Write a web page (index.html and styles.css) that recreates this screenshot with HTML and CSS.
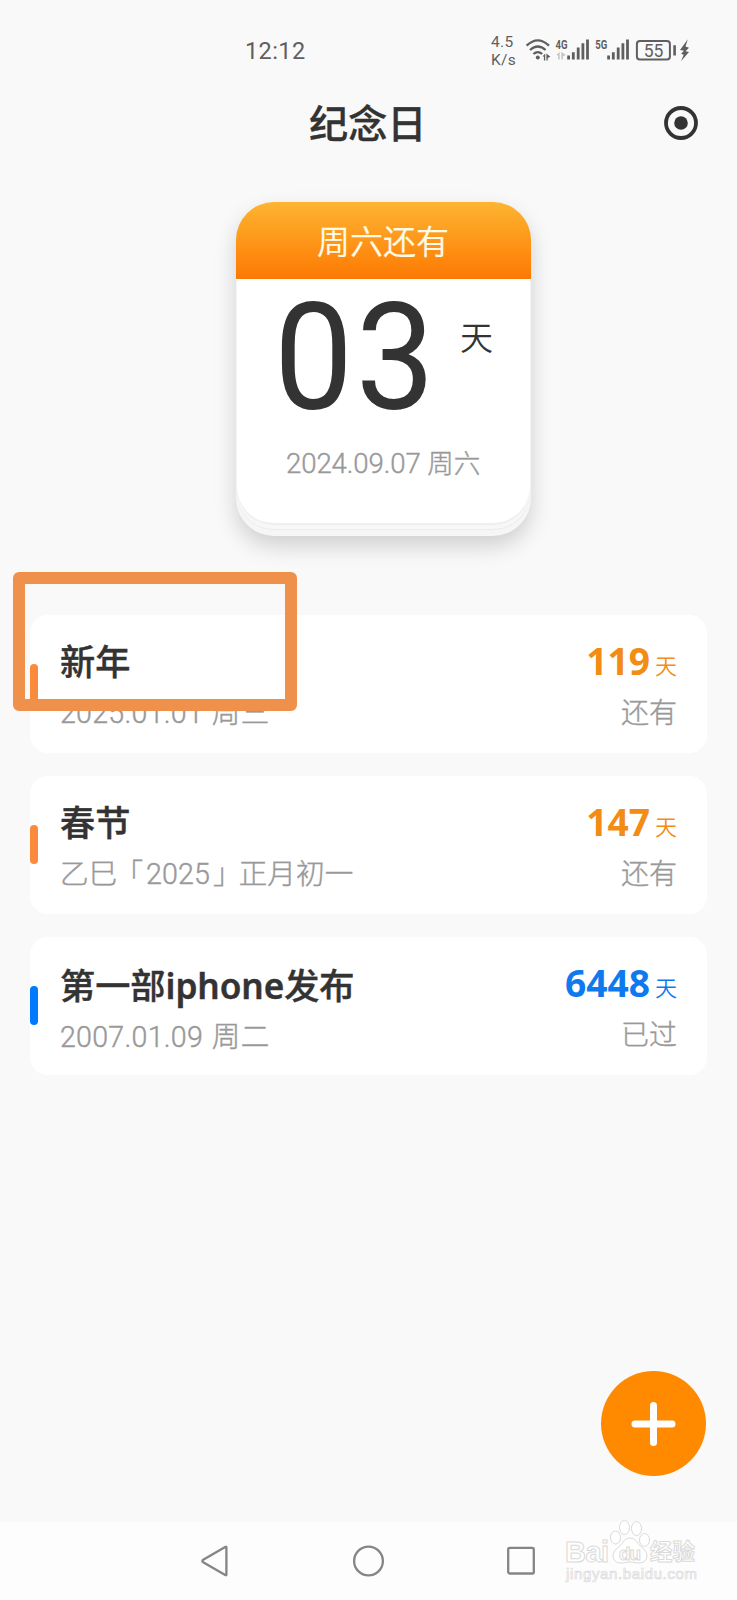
FILE: index.html
```html
<!DOCTYPE html>
<html lang="zh-CN">
<head>
<meta charset="utf-8">
<title>纪念日</title>
<link rel="stylesheet" href="styles.css">
</head>
<body>
<div class="screen">
  <header class="status">
    <span class="clock">12:12</span>
    <div class="speed"><span>4.5</span><span>K/s</span></div>
    <svg class="indicators" width="176" height="32" viewBox="0 0 176 32">
      <g fill="none" stroke="#5f5f5f" stroke-width="2.3">
        <path d="M2.600 9.600Q13.800-.9 25 9.600M6 14Q13.800 7 21.600 14M9.400 18Q13.800 14.200 18.200 18"/>
        <rect x="112.900" y="5.100" width="33" height="18.400" rx="3" stroke-width="2"/>
      </g>
      <g fill="#5f5f5f">
        <circle cx="13.800" cy="21.400" r="2"/>
        <path d="M18.500 20.600l2.700-3v6.800h-1.300v-3.800zM22.400 17.600l4 3.200-2.700 1.200v2.400h-1.300z"/>
        <path d="M43.200 19.600h2.800v3.800h-2.800zM47.900 16.200h2.800v7.200h-2.800zM52.800 11.600h2.800v11.800h-2.800zM57.500 7.200h2.800v16.200h-2.800zM62.100 3.600h2.800v19.800h-2.800z"/>
        <path d="M83.200 19.600H86v3.800h-2.800zM87.900 16.200h2.800v7.200h-2.800zM92.800 11.600h2.800v11.800h-2.800zM97.500 7.200h2.800v16.200h-2.800zM102.100 3.600h2.800v19.800h-2.800z"/>
        <path d="M149.300 9.300h2.600v10.200h-2.600zM163.800 3.200l-7.800 10.800 4 .7-2.900 3 2.600 1-2.700 6.500 8-9.200-3.500-.7 3.500-3.500-3.500-1.400z"/>
      </g>
      <path fill="#c6c6c6" d="M32.400 19l3.300-3.200v7.600h-1.600V19.600zM37.300 15.800l4.500 3.300-2.900 1.300v3h-1.600z"/>
      <text class="net" x="31.500" y="12.600" textLength="12" lengthAdjust="spacingAndGlyphs">4G</text>
      <text class="net" x="71.300" y="12.600" textLength="12" lengthAdjust="spacingAndGlyphs">5G</text>
      <text class="level" x="119.800" y="20.500" textLength="19.500">55</text>
    </svg>
  </header>

  <div class="titlebar">
    <h1>纪念日</h1>
    <svg class="target" width="34" height="34" viewBox="0 0 34 34"><circle cx="17" cy="17" r="15" fill="none" stroke="#333" stroke-width="3.800"/><circle cx="17" cy="17" r="6.800" fill="#333"/></svg>
  </div>

  <section class="calendar">
    <div class="sheet-head">周六还有</div>
    <div class="sheet">
      <div class="count"><span class="big">03</span><span class="unit">天</span></div>
      <div class="date">2024.09.07 <span class="week">周六</span></div>
    </div>
  </section>

  <main class="list">
    <article class="item">
      <i class="mark"></i>
      <div class="info"><h2>新年</h2><p>2025.01.01 <span class="week">周三</span></p></div>
      <div class="days"><div class="num">119<small>天</small></div><p>还有</p></div>
    </article>
    <article class="item">
      <i class="mark"></i>
      <div class="info"><h2>春节</h2><p class="lunar">乙巳<span class="open">「</span>2025<span class="close">」</span>正月初一</p></div>
      <div class="days"><div class="num">147<small>天</small></div><p>还有</p></div>
    </article>
    <article class="item past">
      <i class="mark"></i>
      <div class="info"><h2>第一部<span class="latin">iphone</span>发布</h2><p>2007.01.09 <span class="week">周二</span></p></div>
      <div class="days"><div class="num">6448<small>天</small></div><p>已过</p></div>
    </article>
  </main>

  <button class="fab" aria-label="添加"><svg width="46" height="46" viewBox="0 0 46 46"><path d="M22.500 4.500v37M4 23h37" stroke="#fff" stroke-width="7" stroke-linecap="round"/></svg></button>

  <nav class="nav">
    <svg width="30" height="34" viewBox="0 0 30 34"><path d="M26.400 3.300v27.400Q26.400 31.600 25.200 31L3.200 18.200Q1.500 17 3.200 15.800L25.200 3Q26.400 2.400 26.400 3.300Z"/></svg>
    <svg width="34" height="34" viewBox="0 0 34 34"><circle cx="17.500" cy="17" r="14.400"/></svg>
    <svg width="30" height="34" viewBox="0 0 30 34"><rect x="2.200" y="3.900" width="25.600" height="25.600" rx="1.500"/></svg>
  </nav>

  <div class="highlight"></div>

  <svg class="watermark" width="150" height="76" viewBox="0 0 150 76">
    <g fill="#fff" stroke="#dadada" stroke-width="1">
      <ellipse cx="55.500" cy="22.500" rx="5" ry="6.500"/>
      <ellipse cx="64.500" cy="12.500" rx="5" ry="7"/>
      <ellipse cx="76.500" cy="13.500" rx="5" ry="7"/>
      <ellipse cx="84.500" cy="25" rx="5" ry="6.500"/>
      <path d="M70 23c-6 0-8 7-13 10.500-6 4-5 14 3 14.500 4 .3 6-1 10-1s6 1.300 10 1c8-.5 9-10.500 3-14.500-5-3.500-7-10.500-13-10.500z"/>
      <text class="wm-bai" x="5" y="46.500" textLength="44">Bai</text>
      <text class="wm-du" x="59" y="44.500" textLength="22">du</text>
      <text class="wm-cn" x="90" y="45" textLength="45">经验</text>
      <text class="wm-url" x="6" y="64" textLength="131">jingyan.baidu.com</text>
    </g>
  </svg>
</div>
</body>
</html>
```
FILE: styles.css
```css
* { box-sizing: border-box; margin: 0; padding: 0; }
body { background: #f9f9f9; font-family: Roboto, "Noto Sans CJK SC", sans-serif; color: #333; }
.screen { position: relative; width: 737px; height: 1600px; overflow: hidden; display: flex; flex-direction: column; }

.status { height: 90px; padding: 32px 0 0 245px; display: flex; align-items: flex-start; color: #5f5f5f; }
.clock { width: 246px; font-size: 23.500px; line-height: 38px; letter-spacing: .4px; }
.speed { width: 33px; display: flex; flex-direction: column; font-size: 15.500px; line-height: 18px; letter-spacing: .3px; padding-top: 1px; }
.indicators { margin-top: 4px; }
.net { font: 700 12.500px Roboto, sans-serif; fill: #5f5f5f; }
.level { font: 400 17.500px Roboto, sans-serif; fill: #5f5f5f; }

.titlebar { height: 68px; padding: 0 39px 0 309px; display: flex; justify-content: space-between; align-items: center; }
.titlebar h1 { font-size: 39.200px; line-height: 68px; font-weight: 500; -webkit-text-stroke: .3px #333; padding-top: 1px; }
.target { margin-top: -3px; }

.calendar { width: 295px; height: 334px; margin: 44px 0 0 236px; border-radius: 38px; background: #f6f6f6; box-shadow: 0 10px 22px rgba(0,0,0,.17); flex: none; }
.sheet-head { height: 77px; border-radius: 38px 38px 0 0; background: linear-gradient(#fdb432, #fe880e 75%, #f97904); color: #fffbe8; font-size: 33px; line-height: 81px; text-align: center; font-weight: 350; text-indent: -1px; -webkit-text-stroke: .2px #fffbe8; }
.sheet { height: 244px; margin: 0 1px; border-radius: 0 0 37px 37px; background: #fff; box-shadow: 0 2px 2px #eee, 0 6px 0 #f8f8f8, 0 7px 1px #ebebeb; }
.count { display: flex; height: 150px; padding-left: 37px; }
.big { font-size: 148px; line-height: 159px; letter-spacing: 3px; width: 186px; transform: scaleX(.95); transform-origin: left; }
.unit { font-size: 33px; line-height: 119px; font-weight: 350; }
.date { font-size: 27.600px; line-height: 40px; padding-left: 49px; margin-top: 15px; color: #999; font-weight: 300; -webkit-text-stroke: .4px #999; letter-spacing: -.1px; }
.date .week { font-size: 26.500px; }

.list { margin: 79px 30px 0; display: flex; flex-direction: column; gap: 23.500px; }
.item { height: 137.700px; flex: none; background: #fff; border-radius: 18px; display: flex; align-items: flex-start; padding-right: 30px; }
.mark { width: 8px; height: 39px; margin-top: 49px; border-radius: 4px; background: #fa8a3c; }
.info { flex: 1; padding: 22.500px 0 0 22px; }
h2 { font-size: 35.200px; line-height: 50px; font-weight: 500; -webkit-text-stroke: .4px #333; }
.latin { font-family: "Noto Sans", sans-serif; font-weight: 600; letter-spacing: -.1px; }
.item p { font-size: 28.600px; line-height: 42px; color: #999; font-weight: 300; -webkit-text-stroke: .4px #999; margin-top: 4px; }
.info p { letter-spacing: .25px; }
.info p .week { margin-left: 1.500px; }
.info .lunar { letter-spacing: .1px; }
.open { margin-left: -3px; margin-right: 3px; }
.close { margin-left: 3px; margin-right: -3px; }
.days { padding-top: 21px; text-align: right; }
.days p { margin-top: 7px; font-size: 28px; }
.num { font: 700 37.200px/50px "Noto Sans", sans-serif; color: #f28c14; }
.num small { font: 350 22px "Noto Sans CJK SC", sans-serif; margin-left: 5px; line-height: 1; position: relative; top: -1px; }
.past .mark { background: #007aff; }
.past .num { color: #0f79ee; }

.fab { position: absolute; left: 601px; top: 1371px; width: 105px; height: 105px; border: 0; border-radius: 50%; background: #ff8a00; display: flex; align-items: center; justify-content: center; }
.nav { margin-top: auto; height: 78px; flex: none; background: #fdfdfd; display: flex; justify-content: space-between; align-items: center; padding: 0 201px 0 200px; }
.nav svg { fill: none; stroke: #858585; stroke-width: 2.300; }
.highlight { position: absolute; left: 13px; top: 572px; width: 284px; height: 139px; border: 12px solid #f0914b; border-radius: 6px; }
.watermark { position: absolute; left: 560px; top: 1515px; }
.wm-bai { font: 700 29px "Liberation Sans", sans-serif; }
.wm-du { font: 700 19px "Liberation Sans", sans-serif; }
.wm-cn { font: 700 22.500px "Noto Sans CJK SC", sans-serif; }
.wm-url { font: 400 15px "Liberation Sans", sans-serif; stroke-width: .7; }
```
